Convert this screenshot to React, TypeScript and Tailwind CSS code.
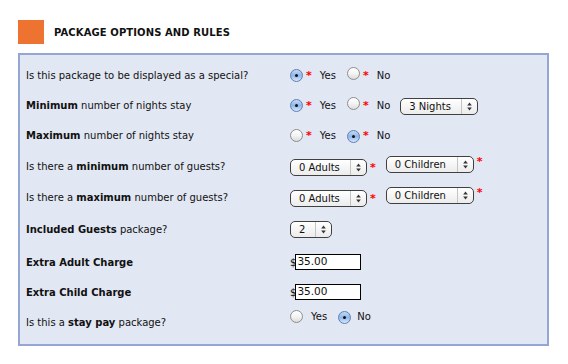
import React from 'react';

const font = { fontFamily: '"DejaVu Sans", Verdana, sans-serif' };

function Radio({ checked }: { checked?: boolean }) {
  return (
    <span
      className={
        'inline-flex h-[13px] w-[13px] shrink-0 items-center justify-center rounded-full border ' +
        (checked
          ? 'border-[#5f7fb0] bg-gradient-to-b from-[#c5daf5] via-[#8fb6ea] to-[#d7e8fb]'
          : 'border-[#8e8e8e] bg-gradient-to-b from-[#ffffff] via-[#f4f4f4] to-[#dcdcdc]')
      }
    >
      {checked && <span className="h-[3px] w-[3px] rounded-full bg-[#111]" />}
    </span>
  );
}

function Star() {
  return <span className="ml-[3px] text-[11px] font-bold leading-none text-[#ff0000]">*</span>;
}

function Select({ label, width }: { label: string; width: string }) {
  return (
    <span
      className={
        'inline-flex h-[17px] items-stretch overflow-hidden rounded-[5px] border border-[#404040] bg-gradient-to-b from-[#ffffff] to-[#ececec] text-[10px] text-[#111] ' +
        width
      }
    >
      <span className="flex flex-1 items-center pl-[8px]">{label}</span>
      <span className="flex w-[16px] items-center justify-center border-l border-[#c4c4c4]">
        <svg width="5" height="9" viewBox="0 0 5 9">
          <path d="M2.5 0.5 L4.8 3.6 L0.2 3.6 Z" fill="#333" />
          <path d="M2.5 8.5 L4.8 5.4 L0.2 5.4 Z" fill="#333" />
        </svg>
      </span>
    </span>
  );
}

function Money({ value }: { value: string }) {
  return (
    <span className="flex items-center text-[10px] text-[#111]">
      <span className="-mr-[1px]">$</span>
      <span className="flex h-[16px] w-[66px] items-center border border-black bg-white pl-[1px] text-[10.5px]">{value}</span>
    </span>
  );
}

function YesNo({ yes }: { yes: boolean }) {
  return (
    <span className="flex items-center text-[10px] text-[#111]">
      <Radio checked={yes} />
      <Star />
      <span className="ml-[8px]">Yes</span>
      <span className="ml-[11px]">
        <Radio checked={!yes} />
      </span>
      <Star />
      <span className="ml-[8px]">No</span>
    </span>
  );
}

function Row({ h, label, children }: { h: string; label: React.ReactNode; children?: React.ReactNode }) {
  return (
    <div className={'flex items-center ' + h}>
      <div className="w-[264px] shrink-0 text-[10px] text-[#111]">{label}</div>
      <div className="flex items-center">{children}</div>
    </div>
  );
}

export default function App() {
  return (
    <div className="h-[364px] w-[568px] bg-white" style={font}>
      <div className="flex items-center pl-[18px] pt-[20px]">
        <div className="h-[24px] w-[26px] bg-[#ee7230]" />
        <h1 className="ml-[10px] text-[10px] font-bold tracking-[0.1px] text-[#111]">PACKAGE OPTIONS AND RULES</h1>
      </div>
      <div className="ml-[18px] mt-[9px] w-[531px] border-2 border-[#94a7d4] bg-[#e1e7f3] pb-[6px] pl-[6px] pt-[5px]">
        <Row h="h-[30px]" label="Is this package to be displayed as a special?">
          <YesNo yes />
        </Row>
        <Row h="h-[30px]" label={<><b>Minimum</b> number of nights stay</>}>
          <YesNo yes />
          <span className="ml-[10px]">
            <Select label="3 Nights" width="w-[78px]" />
          </span>
        </Row>
        <Row h="h-[30px]" label={<><b>Maximum</b> number of nights stay</>}>
          <YesNo yes={false} />
        </Row>
        <Row h="h-[32px]" label={<>Is there a <b>minimum</b> number of guests?</>}>
          <span className="flex items-center pt-[3px]">
            <Select label="0 Adults" width="w-[77px]" />
            <Star />
          </span>
          <span className="ml-[10px] flex items-start self-start">
            <Select label="0 Children" width="w-[88px]" />
            <Star />
          </span>
        </Row>
        <Row h="h-[30px]" label={<>Is there a <b>maximum</b> number of guests?</>}>
          <span className="flex items-center pt-[3px]">
            <Select label="0 Adults" width="w-[77px]" />
            <Star />
          </span>
          <span className="ml-[10px] flex items-start self-start">
            <Select label="0 Children" width="w-[88px]" />
            <Star />
          </span>
        </Row>
        <Row h="h-[34px]" label={<><b>Included Guests</b> package?</>}>
          <Select label="2" width="w-[42px]" />
        </Row>
        <Row h="h-[32px]" label={<b>Extra Adult Charge</b>}>
          <Money value="35.00" />
        </Row>
        <Row h="h-[28px]" label={<b>Extra Child Charge</b>}>
          <Money value="35.00" />
        </Row>
        <Row h="h-[32px]" label={<>Is this a <b>stay pay</b> package?</>}>
          <span className="-mt-[12px] flex items-center text-[10px] text-[#111]">
            <Radio />
            <span className="ml-[8px]">Yes</span>
            <span className="ml-[11px]">
              <Radio checked />
            </span>
            <span className="ml-[6px]">No</span>
          </span>
        </Row>
      </div>
    </div>
  );
}
